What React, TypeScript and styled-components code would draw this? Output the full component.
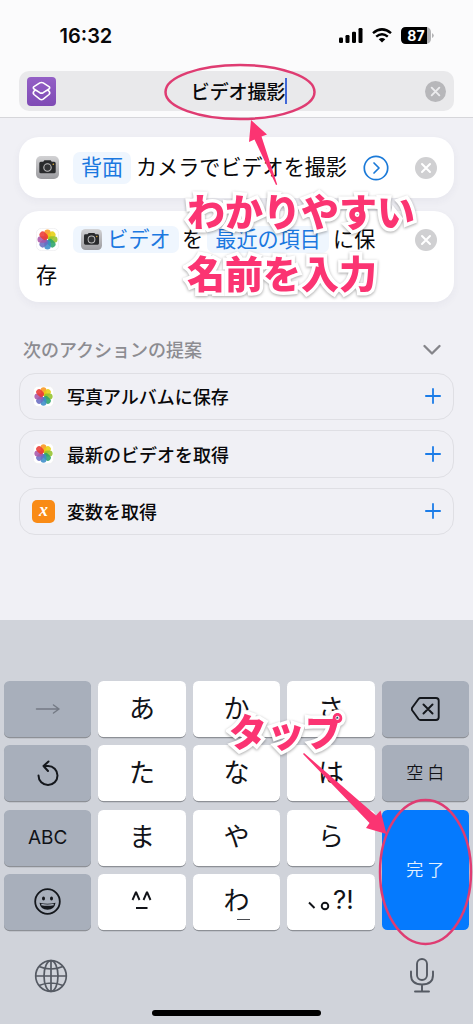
import React from 'react';
import styled, { createGlobalStyle } from 'styled-components';

const PINK = '#fb3472';
const JP = "'Noto Sans CJK JP', sans-serif";

const Global = createGlobalStyle`
  *, *::before, *::after { box-sizing: border-box; }
  body { margin: 0; font-family: Inter, ${JP}; }
  svg { display: block; flex: none; }
`;

const Screen = styled.div`
  position: relative;
  width: 473px;
  height: 1024px;
  display: flex;
  flex-direction: column;
  overflow: hidden;
  background: #f0f0f5;
  color: #08080a;
`;

const Header = styled.header`
  height: 118px;
  flex: none;
  background: #fbfbfc;
  border-bottom: 1px solid #d6d6da;
`;

const StatusBar = styled.div`
  height: 71px;
  padding: 0 39px 0 59.5px;
  display: flex;
  align-items: center;
  justify-content: space-between;
`;

const Clock = styled.div`
  font: 600 20px/24px Inter, sans-serif;
`;

const Indicators = styled.div`
  display: flex;
  align-items: center;
  gap: 9px;
`;

const TitleField = styled.div`
  height: 40px;
  margin: 0 19px;
  padding: 0 8px;
  border-radius: 10px;
  background: #e9e9eb;
  display: flex;
  align-items: center;
  justify-content: space-between;
`;

const TitleText = styled.div`
  display: flex;
  align-items: center;
  font: 500 19px/28px ${JP};
  letter-spacing: -0.1px;
  padding-right: 3px;
`;

const Caret = styled.span`
  width: 2px;
  height: 26px;
  background: #4068d8;
`;

const Content = styled.main`
  height: 502px;
  flex: none;
  padding: 19px 19px 0;
`;

const Card = styled.section<{ $h: number }>`
  height: ${p => p.$h}px;
  margin-bottom: 12.5px;
  border-radius: 20px;
  background: #fff;
  box-shadow: 0 3px 8px rgba(60, 60, 90, 0.05);
  display: flex;
  flex-direction: column;
  padding: 0 17px 0 17px;
`;

const Line = styled.div<{ $h: number; $top?: number }>`
  height: ${p => p.$h}px;
  margin-top: ${p => p.$top ?? 0}px;
  display: flex;
  align-items: center;
  font: 400 21.1px/30px ${JP};
  white-space: nowrap;
`;

const Chip = styled.span<{ $w: number; $h: number; $ml?: number }>`
  width: ${p => p.$w}px;
  height: ${p => p.$h}px;
  margin-left: ${p => p.$ml ?? 0}px;
  border-radius: 7px;
  background: #eff6fe;
  color: #1b78e0;
  display: flex;
  align-items: center;
  justify-content: center;
  gap: 5px;
`;

const Words = styled.span<{ $ml?: number }>`
  margin-left: ${p => p.$ml ?? 0}px;
  padding-bottom: 3px;
`;

const Detail = styled.span`
  margin-left: 16px;
`;

const Push = styled.span`
  margin-left: auto;
`;

const SuggestHeader = styled.div`
  height: 26px;
  margin: 34px 13px 10.5px 4px;
  display: flex;
  align-items: center;
  justify-content: space-between;
  color: #8c8c91;
  font: 500 18px/26px ${JP};
`;

const Suggestion = styled.div`
  height: 47.5px;
  margin-bottom: 10px;
  padding: 0 12px;
  border: 1.5px solid #dfdfe4;
  border-radius: 16px;
  display: flex;
  align-items: center;
  font: 500 18px/26px ${JP};
`;

const SuggestIcon = styled.span`
  width: 23px;
  margin-right: 12px;
  display: flex;
  justify-content: center;
`;

const VariableTile = styled.span`
  width: 23px;
  height: 23px;
  border-radius: 5px;
  background: #f98b16;
  color: #fff;
  text-align: center;
  font: italic 700 18px/20px 'Liberation Serif', serif;
`;

const Keyboard = styled.footer`
  flex: 1;
  padding: 61.4px 4px 0;
  background: #d0d3da;
`;

const Keys = styled.div`
  display: grid;
  grid-template-columns: repeat(5, 87.2px);
  grid-template-rows: repeat(4, 56px);
  column-gap: 7.25px;
  row-gap: 8.1px;
`;

const Key = styled.div<{ $kind?: 'gray' | 'blue'; $size?: number; $gap?: number }>`
  grid-row: ${p => (p.$kind === 'blue' ? 'span 2' : 'auto')};
  border-radius: 5.5px;
  background: ${p => (p.$kind === 'gray' ? '#a8afbb' : p.$kind === 'blue' ? '#057afe' : '#fff')};
  box-shadow: ${p => (p.$kind === 'blue' ? 'none' : '0 1.2px 0 #8d9096')};
  color: ${p => (p.$kind === 'blue' ? '#e4f1ff' : '#111318')};
  display: flex;
  flex-direction: column;
  align-items: center;
  justify-content: center;
  font: ${p => (p.$size ? 350 : 400)} ${p => p.$size ?? 26}px/32px ${JP};
  letter-spacing: ${p => p.$gap ?? 0}px;
  text-indent: ${p => p.$gap ?? 0}px;
  padding-bottom: ${p => (p.$kind ? (p.$size ? 2 : 0) : 5)}px;
`;

const Underlined = styled.span`
  position: relative;

  &::after {
    content: '';
    position: absolute;
    left: 14px;
    bottom: -5px;
    width: 13px;
    height: 1.5px;
    background: #4b4d52;
  }
`;

const Latin = styled.span`
  font: 400 19px/28px Inter, sans-serif;
`;

const BottomBar = styled.div`
  display: flex;
  justify-content: space-between;
  padding: 28.3px 34px 0 30px;
`;

const HomeBar = styled.div`
  width: 169px;
  height: 6px;
  margin: 16px auto 0;
  border-radius: 3px;
  background: #000;
`;

const Overlay = styled.svg`
  position: absolute;
  inset: 0;
  pointer-events: none;
`;

const Callout = styled.div<{ $x: number; $y: number }>`
  position: absolute;
  left: ${p => p.$x}px;
  top: ${p => p.$y}px;
  font: 900 38px/61.5px ${JP};
  white-space: nowrap;
  color: ${PINK};
  -webkit-text-stroke: 7px #fff;
  paint-order: stroke fill;
  filter: drop-shadow(0 1px 1.5px rgba(0, 0, 0, 0.35));
`;

const Clear = ({ size = 22, color = '#d0d0d2', mark = '#fff' }) => (
  <svg width={size} height={size} viewBox="0 0 22 22">
    <circle cx="11" cy="11" r="11" fill={color} />
    <path d="M7 7l8 8M15 7l-8 8" stroke={mark} strokeWidth="2" strokeLinecap="round" />
  </svg>
);

const CameraIcon = ({ size = 23 }) => (
  <svg width={size} height={size} viewBox="0 0 23 23">
    <defs>
      <linearGradient id="cam" x2="0" y2="1">
        <stop stopColor="#d2d2d4" />
        <stop offset="1" stopColor="#9c9ca0" />
      </linearGradient>
    </defs>
    <rect width="23" height="23" rx="5" fill="url(#cam)" />
    <path d="M3.3 7.3q0-1.500 1.500-1.500h2.400l1.200-1.500h6.200l1.200 1.500h2.400q1.500 0 1.500 1.500v8.400q0 1.500-1.500 1.500H4.800q-1.500 0-1.500-1.500z" fill="#292a2c" />
    <circle cx="11.500" cy="11.500" r="3.700" fill="#333436" stroke="#bdbdbe" strokeWidth="1.100" />
    <circle cx="17.300" cy="8.200" r=".8" fill="#e5b43c" />
  </svg>
);

const PETALS = ['#f9961c', '#e6cf10', '#93c22c', '#2ba468', '#3a8cc8', '#6a6cc2', '#a956a8', '#ec3a34'];
const PhotosIcon = ({ size = 23 }) => (
  <svg width={size} height={size} viewBox="0 0 23 23">
    <rect x=".4" y=".4" width="22.200" height="22.200" rx="5" fill="#fff" stroke="#eeeef0" strokeWidth=".8" />
    {PETALS.map((c, i) => (
      <rect key={c} x="8.300" y="1.500" width="6.400" height="9.400" rx="3.200" fill={c} opacity=".88" transform={`rotate(${i * 45} 11.5 11.5)`} />
    ))}
  </svg>
);

const ShortcutsIcon = () => (
  <svg width="29" height="29" viewBox="0 0 29 29">
    <defs>
      <linearGradient id="sc" x2="0" y2="1">
        <stop stopColor="#9460c6" />
        <stop offset="1" stopColor="#7f4bb5" />
      </linearGradient>
    </defs>
    <rect width="29" height="29" rx="4" fill="url(#sc)" />
    <g fill="none" stroke="#fff" strokeWidth="1.600" strokeLinejoin="round">
      <path d="M12.800 5.900L7 9.600q-1.400 1.200 0 2.400l5.800 3.700q1.700.9 3.400 0L22 12q1.400-1.200 0-2.400l-5.800-3.700q-1.700-.9-3.400 0z" />
      <path d="M8.600 13L7 14.200q-1.500 1.600 0 3.300l5.800 4.700q1.700 1.100 3.400 0l5.800-4.700q1.500-1.700 0-3.300L20.400 13" />
    </g>
  </svg>
);

const Signal = () => (
  <svg width="24" height="15" viewBox="0 0 24 15">
    <rect x="0" y="9.500" width="4" height="5.500" rx="1.200" />
    <rect x="6.500" y="7" width="4" height="8" rx="1.200" />
    <rect x="13" y="3.800" width="4" height="11.200" rx="1.200" />
    <rect x="19.500" y="0" width="4" height="15" rx="1.200" />
  </svg>
);

const Wifi = () => (
  <svg width="20" height="15" viewBox="0 0 20 15" fill="none" stroke="#000" strokeWidth="2.500">
    <path d="M1 5.100Q10-2.300 19 5.100M4.200 8.600Q10 3.800 15.800 8.600" />
    <path d="M10 14.600L6.700 11.300Q10 8.500 13.300 11.300z" fill="#000" stroke="none" />
  </svg>
);

const Battery = () => (
  <svg width="33" height="17" viewBox="0 0 33 17">
    <rect width="30" height="17" rx="5" fill="#b3b3b5" />
    <path d="M5 0H26V17H5Q0 17 0 12V5Q0 0 5 0z" />
    <path d="M31 6q1.800 1 1.800 2.500T31 11z" fill="#b3b3b5" />
    <text x="15" y="13.500" textAnchor="middle" fill="#fff" fontFamily="Inter" fontWeight="700" fontSize="14">87</text>
  </svg>
);

const Plus = () => (
  <svg width="16" height="16" viewBox="0 0 16 16" stroke="#1b7ce8" strokeWidth="1.800" strokeLinecap="round">
    <path d="M8 .9v14.200M.9 8h14.200" />
  </svg>
);

const suggestions = [
  { icon: <PhotosIcon size={21} />, label: '写真アルバムに保存' },
  { icon: <PhotosIcon size={21} />, label: '最新のビデオを取得' },
  { icon: <VariableTile>x</VariableTile>, label: '変数を取得' },
];

export default function App() {
  return (
    <Screen>
      <Global />
      <Header>
        <StatusBar>
          <Clock>16:32</Clock>
          <Indicators><Signal /><Wifi /><Battery /></Indicators>
        </StatusBar>
        <TitleField>
          <ShortcutsIcon />
          <TitleText>ビデオ撮影<Caret /></TitleText>
          <Clear size={21} color="#b7b7ba" mark="#ececee" />
        </TitleField>
      </Header>

      <Content>
        <Card $h={61}>
          <Line $h={61}>
            <CameraIcon />
            <Chip $w={58} $h={32} $ml={14}><Words>背面</Words></Chip>
            <Words $ml={5}>カメラでビデオを撮影</Words>
            <Detail>
              <svg width="26" height="26" viewBox="0 0 26 26" fill="none" stroke="#1b7ad8" strokeWidth="1.700" strokeLinecap="round" strokeLinejoin="round">
                <circle cx="13" cy="13" r="11.700" />
                <path d="M11 8l5 5-5 5" />
              </svg>
            </Detail>
            <Push><Clear /></Push>
          </Line>
        </Card>
        <Card $h={91.5}>
          <Line $h={30} $top={14}>
            <PhotosIcon />
            <Chip $w={106} $h={27} $ml={14}><CameraIcon size={21} /><Words>ビデオ</Words></Chip>
            <Words $ml={3}>を</Words>
            <Chip $w={122} $h={27} $ml={4}><Words>最近の項目</Words></Chip>
            <Words $ml={4}>に保</Words>
            <Push><Clear /></Push>
          </Line>
          <Line $h={30} $top={6}><Words>存</Words></Line>
        </Card>

        <SuggestHeader>
          次のアクションの提案
          <svg width="18" height="12" viewBox="0 0 18 12" fill="none" stroke="#85858a" strokeWidth="2.300" strokeLinecap="round" strokeLinejoin="round">
            <path d="M1.500 3l7.500 7.500L16.500 3" />
          </svg>
        </SuggestHeader>
        {suggestions.map(s => (
          <Suggestion key={s.label}>
            <SuggestIcon>{s.icon}</SuggestIcon>
            {s.label}
            <Push><Plus /></Push>
          </Suggestion>
        ))}
      </Content>

      <Keyboard>
        <Keys>
          <Key $kind="gray">
            <svg width="26" height="12" viewBox="0 0 26 12" fill="none" stroke="#747a85" strokeWidth="1.500" strokeLinecap="round" strokeLinejoin="round">
              <path d="M1.500 6h22.500M18.500 2L24 6l-5.500 4" />
            </svg>
          </Key>
          <Key>あ</Key><Key>か</Key><Key>さ</Key>
          <Key $kind="gray">
            <svg width="29" height="24" viewBox="0 0 29 24" fill="none" stroke="#14171c" strokeWidth="1.900" strokeLinecap="round" strokeLinejoin="round">
              <path d="M9.500 1H25q2.700 0 2.700 2.700v16.600Q27.700 23 25 23H9.500Q8.300 23 7.500 22L1.300 13.500q-1-1.500 0-3L7.500 2Q8.300 1 9.500 1zM12.500 7.500l9 9M21.500 7.500l-9 9" />
            </svg>
          </Key>
          <Key $kind="gray">
            <svg width="22" height="26" viewBox="0 0 22 26" fill="none" stroke="#14171c" strokeWidth="2" strokeLinecap="round" strokeLinejoin="round">
              <path d="M1.500 15.500A9.500 9.500 0 1 0 11 6H6.500M11.500 1.500L6.500 6l4.500 5" />
            </svg>
          </Key>
          <Key>た</Key><Key>な</Key><Key>は</Key>
          <Key $kind="gray" $size={17} $gap={4}>空白</Key>
          <Key $kind="gray"><Latin>ABC</Latin></Key>
          <Key>ま</Key><Key>や</Key><Key>ら</Key>
          <Key $kind="blue" $size={17} $gap={4}>完了</Key>
          <Key $kind="gray">
            <svg width="27" height="27" viewBox="0 0 27 27">
              <circle cx="13.500" cy="13.500" r="12.300" fill="none" stroke="#14171c" strokeWidth="1.800" />
              <ellipse cx="9.500" cy="10.500" rx="1.500" ry="1.900" fill="#14171c" />
              <ellipse cx="17.500" cy="10.500" rx="1.500" ry="1.900" fill="#14171c" />
              <path d="M5.500 14.800Q13.500 16.500 21.500 14.800Q20.500 21.800 13.500 21.800T5.500 14.800z" fill="#14171c" />
              <path d="M7.300 16.500q6.200 1.300 12.400 0" fill="none" stroke="#a8afbb" strokeWidth="1.300" />
            </svg>
          </Key>
          <Key>
            <svg width="22" height="19" viewBox="0 0 22 19" fill="none" stroke="#111318" strokeWidth="1.900" strokeLinejoin="bevel">
              <path d="M1.500 10L5 2l3.500 8M12.500 10L16 2l3.500 8M5 18h11.500" />
            </svg>
          </Key>
          <Key><Underlined>わ</Underlined></Key>
          <Key>
            <svg width="48" height="30" viewBox="0 0 48 30" fill="none" stroke="#111318" strokeWidth="1.900">
              <path d="M2 18.500l5.500 5.500" />
              <circle cx="18" cy="22" r="3.300" />
              <text x="26" y="25" fontFamily="Inter" fontSize="26" fill="#111318" stroke="none">?!</text>
            </svg>
          </Key>
        </Keys>
        <BottomBar>
          <svg width="42" height="36" viewBox="0 0 42 36" fill="none" stroke="#555a63" strokeWidth="1.700">
            <circle cx="17" cy="18" r="15.300" />
            <ellipse cx="17" cy="18" rx="7" ry="15.300" />
            <path d="M17 2.700v30.600M1.700 18h30.600M5 8.500q12 5 24 0M5 27.500q12-5 24 0" />
          </svg>
          <svg width="26" height="36" viewBox="0 0 26 36" fill="none" stroke="#555a63" strokeWidth="1.900" strokeLinecap="round">
            <rect x="8" y="1" width="10" height="21" rx="5" />
            <path d="M2 13.500v3.500q0 9.500 11 9.500t11-9.500V13.500M13 26.500v6.500M6 33.500h14" />
          </svg>
        </BottomBar>
        <HomeBar />
      </Keyboard>

      <Overlay width="473" height="1024" viewBox="0 0 473 1024">
        <g fill="none" stroke="#df3c72" strokeWidth="2.500">
          <ellipse cx="240" cy="92" rx="74.500" ry="27" />
          <ellipse cx="425.500" cy="872" rx="45.500" ry="72" />
        </g>
        <path d="M276 185L254.500 139.500L249 142L251 120L267 134.500L261.500 136.500L277.200 184.500z" fill={PINK} />
        <path d="M303 754L369.500 823L366 828L386.500 834L380.500 810.500L376 815.500L304 753z" fill={PINK} />
      </Overlay>
      <Callout $x={187} $y={179}>わかりやすい<br />名前を入力</Callout>
      <Callout $x={229} $y={699}>タップ</Callout>
    </Screen>
  );
}
